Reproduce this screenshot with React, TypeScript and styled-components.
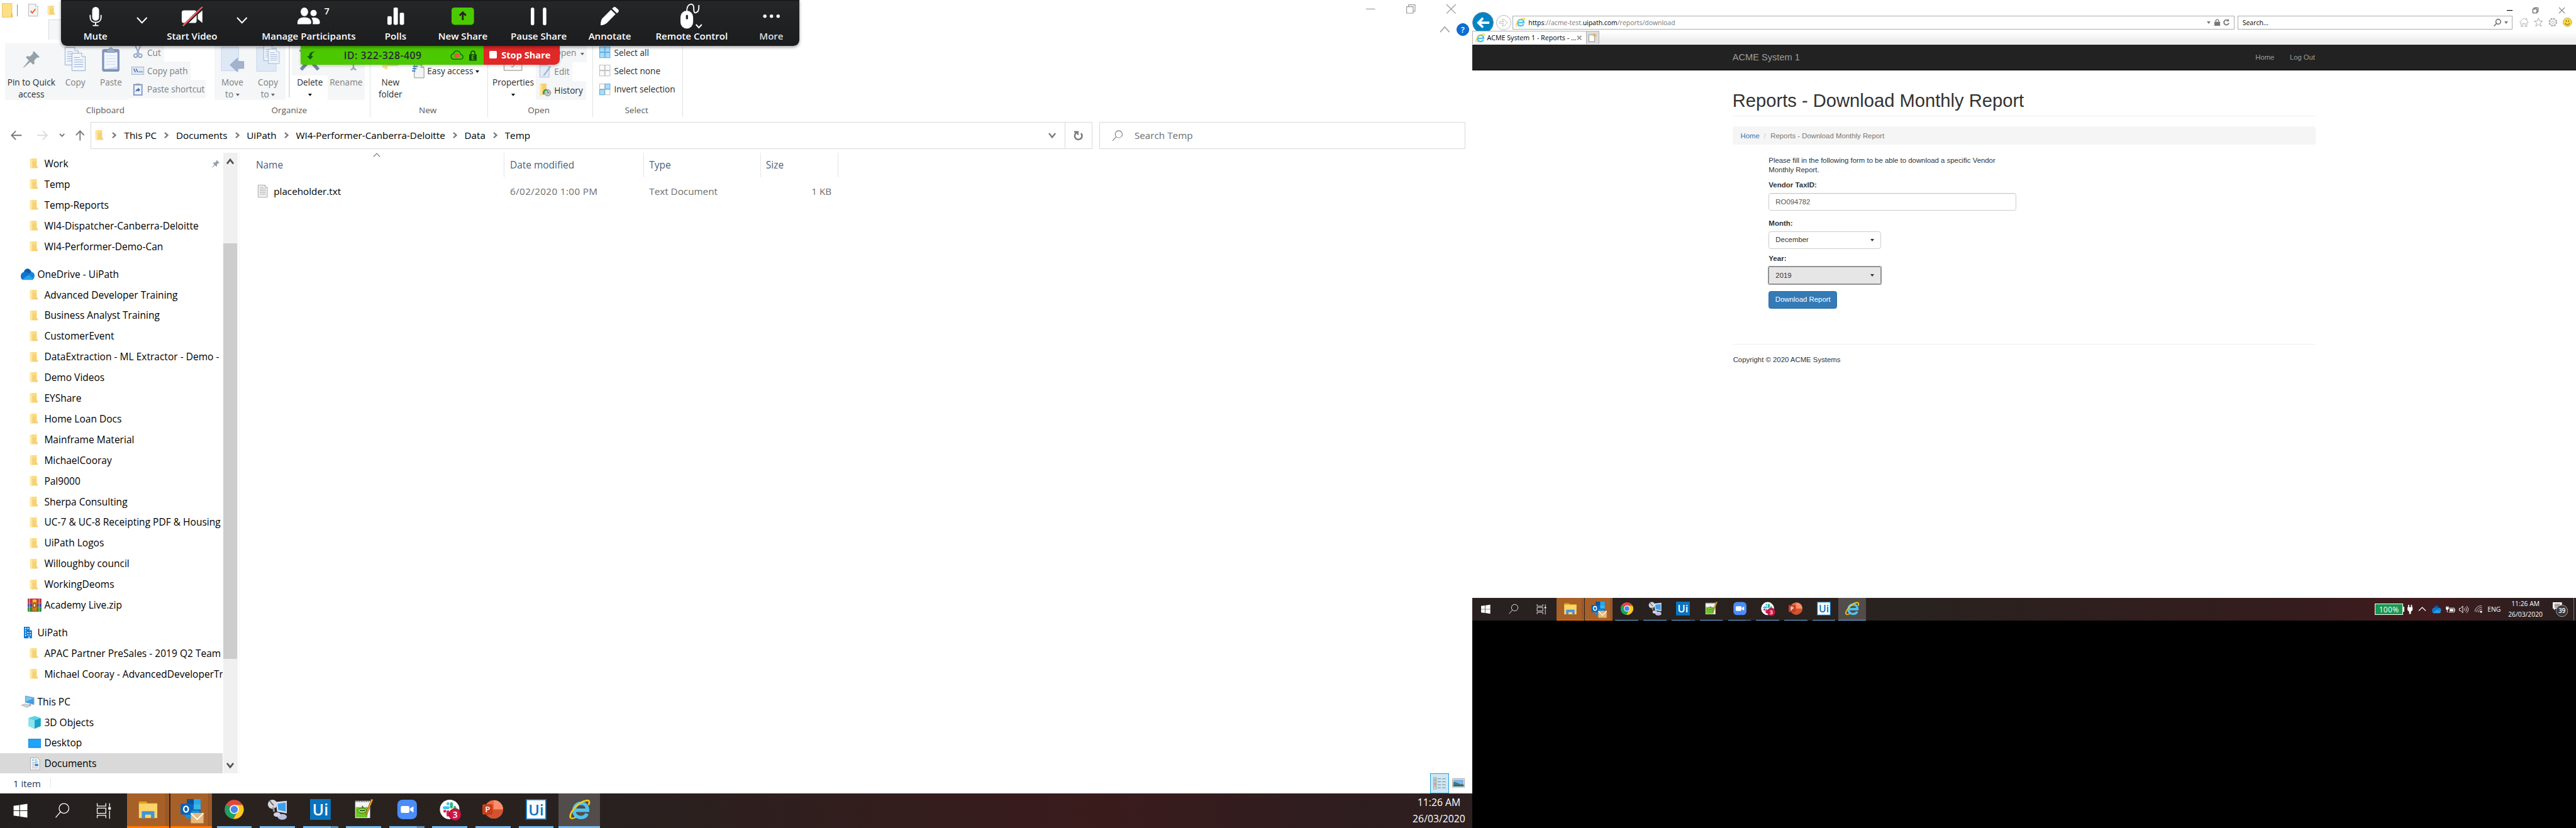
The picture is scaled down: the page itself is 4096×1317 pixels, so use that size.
import React from "react";
import styled, { createGlobalStyle, css } from "styled-components";

const Global = createGlobalStyle`
  html, body { margin: 0; padding: 0; background: #000; overflow: hidden; }
  * { box-sizing: border-box; }
  svg { display: block; flex: none; overflow: visible; }
`;

const UI = `"Open Sans", "Noto Sans", sans-serif`;
const ARIAL = `"Liberation Sans", Arial, sans-serif`;

/* ---------- desktop ---------- */
const Desktop = styled.div`
  zoom: 0.9142857;
  display: flex;
  width: 4480px;
  height: 1441px;
  background: #000;
  font-family: ${UI};
  color: #000;
  white-space: nowrap;
`;
const LeftMonitor = styled.div`
  position: relative;
  display: flex;
  flex-direction: column;
  width: 2560px;
  height: 1441px;
  background: #fff;
`;
const RightMonitor = styled.div`
  display: flex;
  flex-direction: column;
  width: 1920px;
  height: 1080px;
  background: #fff;
`;
const Spacer = styled.div`flex: 1;`;

/* ---------- explorer ---------- */
const TitleRow = styled.div`
  display: flex;
  align-items: flex-start;
  height: 34px;
  padding: 4px 28px 0 3px;
`;
const QuickAccess = styled.div`
  display: flex;
  align-items: center;
  height: 28px;
`;
const QuickDivider = styled.div`
  width: 1px;
  height: 20px;
  margin: 0 18px 0 8px;
  background: #8a8a8a;
`;
const WindowButtons = styled.div<{ $gap: number; $top: number }>`
  display: flex;
  align-items: center;
  gap: ${p => p.$gap}px;
  padding-top: ${p => p.$top}px;
`;
const TabRow = styled.div`
  display: flex;
  align-items: flex-start;
  height: 41px;
  padding: 0 5px 0 84px;
`;
const RibbonTab = styled.div`
  width: 60px;
  height: 35px;
  background: #f5f6f7;
  border: 1px solid #dadbdc;
  border-bottom: 0;
`;
const TabTools = styled.div`
  display: flex;
  align-items: center;
  gap: 12px;
  padding-top: 6px;
`;
const HelpBadge = styled.div`
  display: flex;
  align-items: center;
  justify-content: center;
  width: 22px;
  height: 22px;
  border-radius: 50%;
  background: #0a6fd6;
  border: 1px solid #0a55b5;
  color: #fff;
  font-size: 14px;
  font-weight: 600;
`;
const Ribbon = styled.div`
  display: flex;
  height: 137px;
`;
const Group = styled.div<{ $w: number; $line?: boolean }>`
  display: flex;
  flex-direction: column;
  width: ${p => p.$w}px;
  height: 128px;
  ${p => p.$line && css`border-right: 1px solid #e1e2e3;`}
`;
const GroupBody = styled.div<{ $pl?: number }>`
  display: flex;
  height: 99px;
  padding-left: ${p => p.$pl || 0}px;
`;
const GroupLabel = styled.div<{ $c: number }>`
  width: ${p => p.$c * 2}px;
  height: 29px;
  line-height: 37px;
  text-align: center;
  font-size: 14.8px;
  color: #5a5a5a;
`;
const BigButton = styled.div<{ $w: number; $bg?: boolean; $dim?: boolean; $iconBg?: boolean }>`
  display: flex;
  flex-direction: column;
  align-items: center;
  width: ${p => p.$w}px;
  height: 99px;
  font-size: 14.9px;
  line-height: 21px;
  text-align: center;
  color: ${p => (p.$dim ? "#7c7f82" : "#2d2d2d")};
  background: ${p => (p.$bg ? "#f4f6f7" : p.$iconBg ? "linear-gradient(#f4f6f7 56px, #fff 56px)" : "transparent")};
`;
const BigIcon = styled.div`
  display: flex;
  align-items: center;
  justify-content: center;
  height: 57px;
`;
const SmallList = styled.div<{ $ml?: number }>`
  display: flex;
  flex-direction: column;
  align-items: flex-start;
  margin-left: ${p => p.$ml || 0}px;
`;
const SmallButton = styled.div<{ $w?: number; $bg?: boolean; $dim?: boolean; $h?: number }>`
  display: flex;
  align-items: center;
  width: ${p => (p.$w ? p.$w + "px" : "auto")};
  height: ${p => p.$h || 32}px;
  font-size: 14.9px;
  color: ${p => (p.$dim ? "#7c7f82" : "#2d2d2d")};
  background: ${p => (p.$bg ? "#f4f6f7" : "transparent")};
`;
const SmallIcon = styled.div<{ $w: number }>`
  display: flex;
  justify-content: center;
  width: ${p => p.$w}px;
`;
const OrganizeLine = styled.div`
  width: 2px;
  height: 95px;
  margin: 0 4px 0 5px;
  background: #dfe0e1;
`;
const DownTri = styled.i<{ $dim?: boolean; $s?: number; $c?: string }>`
  display: inline-block;
  vertical-align: middle;
  border: ${p => p.$s || 4}px solid transparent;
  border-top: ${p => (p.$s || 4) + 1}px solid ${p => p.$c || (p.$dim ? "#666" : "#111")};
  border-bottom: 0;
`;

const AddressRow = styled.div`
  display: flex;
  height: 53px;
  padding-right: 12px;
  font-size: 16.7px;
`;
const NavArrows = styled.div`
  display: flex;
  align-items: center;
  width: 158px;
  height: 47px;
  padding-left: 19px;
`;
const NavSlot = styled.div<{ $w: number }>`
  width: ${p => p.$w}px;
`;
const AddressBox = styled.div`
  display: flex;
  align-items: center;
  width: 1742px;
  height: 47px;
  padding-left: 6px;
  border: 1px solid #d9d9d9;
`;
const CrumbSep = styled.div<{ $w?: number }>`
  display: flex;
  justify-content: center;
  width: ${p => p.$w || 33.6}px;
`;
const RefreshCell = styled.div`
  display: flex;
  align-items: center;
  justify-content: center;
  width: 47px;
  height: 45px;
  margin-left: 17px;
  border-left: 1px solid #d9d9d9;
`;
const SearchBox = styled.div`
  display: flex;
  align-items: center;
  gap: 20px;
  width: 636px;
  height: 47px;
  margin-left: 12px;
  padding-left: 21px;
  border: 1px solid #d9d9d9;
  color: #6d6d6d;
`;

const Main = styled.div`
  display: flex;
  height: 1080px;
`;
const Tree = styled.div`
  display: flex;
  flex-direction: column;
  width: 387px;
  height: 1080px;
  padding-top: 2px;
  overflow: hidden;
`;
const TreeRow = styled.div<{ $root?: boolean; $active?: boolean }>`
  display: flex;
  align-items: center;
  flex: none;
  height: 36px;
  margin-top: ${p => (p.$root ? 12 : 0)}px;
  padding-left: ${p => (p.$root ? 34 : 46)}px;
  font-size: 17px;
  background: ${p => (p.$active ? "#d9d9d9" : "transparent")};
`;
const TreeIcon = styled.div<{ $shift: number }>`
  display: flex;
  align-items: center;
  justify-content: center;
  flex: none;
  width: 31px;
  padding-right: ${p => p.$shift}px;
`;
const TreeText = styled.span`
  flex: 1;
  padding-bottom: 1px;
`;
const PinSlot = styled.div`
  padding-right: 5px;
`;
const ScrollBar = styled.div`
  display: flex;
  flex-direction: column;
  align-items: center;
  width: 25px;
  height: 1079px;
  margin: 1px 3px 0 1px;
  background: #f0f0f0;
`;
const ScrollArrow = styled.div<{ $h: number; $pt: number }>`
  height: ${p => p.$h}px;
  padding-top: ${p => p.$pt}px;
`;
const ScrollThumb = styled.div`
  width: 24px;
  height: 723px;
  background: #cdcdcd;
`;
const FileList = styled.div`
  display: flex;
  flex-direction: column;
  flex: 1;
  border-left: 2px solid #f6f6f6;
`;
const HeaderRow = styled.div`
  display: flex;
  height: 42px;
  margin-top: 1px;
  color: #4c607a;
  font-size: 16.9px;
`;
const HeaderCell = styled.div<{ $w: number; $pl: number }>`
  position: relative;
  display: flex;
  width: ${p => p.$w}px;
  padding-left: ${p => p.$pl}px;
  line-height: 43px;
  border-right: 1px solid #e5e5e5;
`;
const SortMark = styled.div`
  position: absolute;
  left: 233px;
  top: 1px;
`;
const FileRow = styled.div`
  display: flex;
  align-items: center;
  height: 36px;
  margin-top: 7px;
  font-size: 16.7px;
  color: #6d6d6d;
`;
const FileCell = styled.div<{ $w: number; $pl?: number; $dark?: boolean; $right?: boolean; $ls?: number }>`
  display: flex;
  align-items: center;
  gap: 11px;
  width: ${p => p.$w}px;
  padding-left: ${p => p.$pl || 0}px;
  padding-right: ${p => (p.$right ? 11 : 0)}px;
  justify-content: ${p => (p.$right ? "flex-end" : "flex-start")};
  letter-spacing: ${p => p.$ls || 0}px;
  color: ${p => (p.$dark ? "#000" : "#6d6d6d")};
`;
const StatusBar = styled.div`
  display: flex;
  align-items: center;
  height: 35px;
  padding: 0 12px 0 23px;
  font-size: 16.4px;
  color: #1e395b;
`;
const StatusLine = styled.div`
  width: 1px;
  height: 17px;
  margin-left: 17px;
  background: #e6e6e6;
`;
const ViewButton = styled.div<{ $on?: boolean }>`
  display: flex;
  align-items: center;
  justify-content: center;
  width: ${p => (p.$on ? 33 : 22)}px;
  height: 35px;
  margin-left: 6px;
  background: ${p => (p.$on ? "#cce8f6" : "transparent")};
  border: ${p => (p.$on ? "1px solid #2a9fd8" : "0")};
`;

/* ---------- meeting toolbar ---------- */
const MeetingOverlay = styled.div`
  position: absolute;
  left: 106px;
  top: 0;
  width: 1284px;
`;
const MeetingBar = styled.div`
  position: relative;
  z-index: 2;
  display: flex;
  height: 80px;
  border-radius: 0 0 10px 10px;
  background: linear-gradient(#141516 0, #252628 3px, #1b1c1e 100%);
  box-shadow: 0 2px 6px rgba(0, 0, 0, 0.4);
`;
const MeetingItem = styled.div<{ $w: number; $dim?: boolean }>`
  position: relative;
  display: flex;
  flex-direction: column;
  align-items: center;
  width: ${p => p.$w}px;
  color: ${p => (p.$dim ? "#dcdcdc" : "#fff")};
  font-size: 16.5px;
  font-weight: 600;
  line-height: 24px;
`;
const MeetingIcon = styled.div`
  display: flex;
  align-items: center;
  justify-content: center;
  height: 51px;
  padding-top: 6px;
`;
const ChevronSlot = styled.div`
  display: flex;
  justify-content: center;
  width: 42px;
  padding-top: 31px;
`;
const Count = styled.span`
  position: absolute;
  left: 122px;
  top: 8px;
  font-size: 16px;
`;
const ShareStrip = styled.div`
  display: flex;
  width: 450px;
  height: 33px;
  margin-left: 417px;
  border-radius: 0 0 9px 4px;
  overflow: hidden;
  box-shadow: 0 2px 5px rgba(0, 0, 0, 0.2);
`;
const MeetingId = styled.div`
  display: flex;
  align-items: center;
  width: 318px;
  padding-left: 11px;
  background: #4cc800;
  color: #232b33;
  font-size: 17.2px;
  font-weight: 600;
`;
const IdText = styled.span`
  width: 134px;
  margin-left: 49px;
  letter-spacing: 0.6px;
`;
const IdIcons = styled.div`
  display: flex;
  align-items: center;
  gap: 10px;
  margin-left: 51px;
`;
const StopShare = styled.div`
  display: flex;
  align-items: center;
  gap: 8px;
  width: 132px;
  padding: 0 0 3px 10px;
  background: #e02828;
  color: #fff;
  font-size: 16px;
  font-weight: 700;
`;
const StopSquare = styled.div`
  width: 13px;
  height: 13px;
  border-radius: 2px;
  background: #fff;
`;

/* ---------- taskbar ---------- */
const Bar = styled.div<{ $k: number; $right?: boolean }>`
  display: flex;
  align-items: stretch;
  height: ${p => (p.$k === 1 ? 61 : 40)}px;
  color: #fff;
  background: ${p =>
    p.$right
      ? "linear-gradient(90deg, #28211f 0, #29221f 40%, #351c1d 75%, #421c1e 87%, #301e1f 94%, #2b2021 100%)"
      : "linear-gradient(90deg, #231f1f 0, #29221e 12%, #28211f 42%, #331d1d 60%, #3a1b1c 75%, #2f1d1f 90%, #2e1f20 100%)"};
`;
const BarSlot = styled.div<{ $w: number }>`
  display: flex;
  align-items: center;
  justify-content: center;
  width: ${p => p.$w}px;
`;
const Tile = styled.div<{ $k: number; $kind?: string }>`
  display: flex;
  flex-direction: column;
  align-items: center;
  width: ${p => (p.$k === 1 ? 73 : 48)}px;
  margin-right: ${p => (p.$k === 1 ? 2 : 1)}px;
  background: ${p =>
    p.$kind === "alert"
      ? "linear-gradient(90deg, #a86029 91%, #8b4f25 91%, #9c5a29 94%)"
      : p.$kind === "active"
      ? "#524c4a"
      : "transparent"};
`;
const TileIcon = styled.div`
  flex: 1;
  display: flex;
  align-items: center;
`;
const Underline = styled.div<{ $k: number; $kind?: string }>`
  width: ${p => (p.$kind === "alert" || p.$kind === "active" ? "100%" : p.$k === 1 ? "61px" : "40px")};
  height: ${p => (p.$k === 1 ? 4 : 2)}px;
  background: ${p =>
    p.$kind === "alert"
      ? "#ff7800"
      : p.$kind === "multi"
      ? "linear-gradient(90deg, #76b9ed 78%, #436f91 78%, #5d90b8 81%)"
      : "#76b9ed"};
`;
const Clock = styled.div<{ $fs: number; $lh: number; $w: number }>`
  width: ${p => p.$w}px;
  text-align: center;
  font-size: ${p => p.$fs}px;
  line-height: ${p => p.$lh}px;
  align-self: center;
`;
const Tray = styled.div`
  display: flex;
  align-items: center;
`;
const BatteryMeter = styled.div`
  display: flex;
  align-items: center;
  justify-content: center;
  width: 49px;
  height: 20px;
  border: 2px solid #fff;
  background: #1a9850;
  font-size: 13px;
  letter-spacing: 0.4px;
`;
const BatteryNub = styled.div`
  width: 2px;
  height: 9px;
  background: #fff;
`;
const TrayText = styled.span`
  display: block;
  width: 24px;
  font-size: 11.4px;
`;
const TraySlot = styled.div<{ $ml: number }>`
  margin-left: ${p => p.$ml}px;
`;
const ShowDesktop = styled.div`
  width: 4px;
  height: 40px;
  margin-left: 10px;
  border-left: 1px solid #7a7070;
`;

/* ---------- browser ---------- */
const BrowserTop = styled.div`
  display: flex;
  justify-content: flex-end;
  height: 27px;
  padding: 9px 20px 0 0;
`;
const BrowserRow = styled.div`
  display: flex;
  align-items: center;
  height: 24px;
  margin-bottom: 3px;
  padding-left: 1px;
`;
const BackButton = styled.div`
  display: flex;
  align-items: center;
  justify-content: center;
  width: 37px;
  height: 37px;
  border-radius: 50%;
  flex: none;
  background: #0083c5;
  border: 1px solid #6d8ea0;
`;
const ForwardButton = styled.div`
  display: flex;
  align-items: center;
  justify-content: center;
  width: 26px;
  height: 26px;
  margin: 0 3px 0 4px;
  border: 1px solid #b5b5b5;
  border-radius: 50%;
  flex: none;
`;
const UrlBox = styled.div<{ $w: number; $ml?: number; $pl?: number }>`
  display: flex;
  align-items: center;
  gap: 6px;
  width: ${p => p.$w}px;
  height: 24px;
  flex: none;
  margin-left: ${p => p.$ml || 0}px;
  padding: 0 7px 0 ${p => p.$pl || 4}px;
  border: 1px solid #adadad;
  background: #fff;
  font-size: 11.45px;
`;
const UrlText = styled.span`
  color: #777;
  b { font-weight: 400; color: #000; }
`;
const BrowserTools = styled.div`
  display: flex;
  align-items: center;
  gap: 9px;
  margin-left: 12px;
`;
const TabStrip = styled.div`
  position: relative;
  display: flex;
  height: 24px;
  border-bottom: 1px solid #fff;
  background: linear-gradient(#fff 10%, #f1f1f1 60%, #ebebeb);
`;
const BrowserTab = styled.div`
  display: flex;
  align-items: center;
  width: 199px;
  padding-left: 5px;
  background: #fff;
  border: 1px solid #b0b0b0;
  border-bottom: 0;
  font-size: 11.7px;
`;
const TabTitle = styled.span`
  width: 161px;
  padding-left: 4px;
`;
const NewTab = styled.div`
  display: flex;
  align-items: center;
  justify-content: center;
  width: 22px;
  background: #dcdcdc;
  border: 1px solid #b5b5b5;
  border-left: 0;
  border-bottom: 0;
`;
const SiteNav = styled.div`
  display: flex;
  align-items: center;
  height: 45px;
  padding: 0 454px 0 453px;
  background: #222;
  border-bottom: 1px solid #000;
  color: #9d9d9d;
  font-family: ${ARIAL};
  font-size: 12.3px;
`;
const Brand = styled.span`
  flex: 1;
  font-size: 16px;
`;
const NavLink = styled.span`
  margin-left: 27px;
`;
const Page = styled.div`
  display: flex;
  flex-direction: column;
  height: 917px;
  padding: 0 453px;
  font-family: ${ARIAL};
  font-size: 12.45px;
  color: #333;
`;
const PageTitle = styled.h1`
  height: 79px;
  margin: 0 0 18px;
  padding: 34px 0 0 0;
  font-size: 31.9px;
  font-weight: 400;
  line-height: 36px;
  border-bottom: 1px solid #eee;
`;
const Breadcrumb = styled.div`
  display: flex;
  align-items: center;
  height: 32px;
  padding-left: 14px;
  border-radius: 4px;
  background: #f5f5f5;
  color: #777;
  a { color: #337ab7; }
  i { color: #ccc; font-style: normal; width: 20px; text-align: center; margin: 0 0 0 -1px; }
`;
const Form = styled.div`
  display: flex;
  flex-direction: column;
  align-items: flex-start;
  height: 347px;
  padding: 19px 0 0 63px;
  border-bottom: 1px solid #eee;
  line-height: 17px;
`;
const FieldLabel = styled.div<{ $mt: number }>`
  margin: ${p => p.$mt}px 0 5px;
  font-weight: 700;
  font-size: 12.6px;
`;
const TextField = styled.div`
  display: flex;
  align-items: center;
  width: 431px;
  height: 31px;
  padding-left: 11px;
  border: 1px solid #ccc;
  border-radius: 4px;
  color: #555;
  box-shadow: inset 0 1px 1px rgba(0, 0, 0, 0.075);
`;
const Select = styled.div<{ $active?: boolean }>`
  display: flex;
  align-items: center;
  justify-content: space-between;
  width: 195px;
  height: ${p => (p.$active ? 31 : 30)}px;
  padding: 0 10px 0 11px;
  border: 1px solid ${p => (p.$active ? "#8c8c8c" : "#ccc")};
  border-radius: ${p => (p.$active ? 2 : 4)}px;
  background: ${p => (p.$active ? "#e6e6e6" : "#fff")};
  outline: ${p => (p.$active ? "1px dotted #333" : "none")};
`;
const SubmitButton = styled.div`
  display: flex;
  align-items: center;
  justify-content: center;
  width: 119px;
  height: 30px;
  margin-top: 12px;
  border: 1px solid #2e6da4;
  border-radius: 4px;
  background: #337ab7;
  color: #fff;
`;
const Copyright = styled.div`
  padding: 20px 0 0 1px;
`;

/* ---------- icons ---------- */
const Folder = ({ w = 15, h = 20 }: { w?: number; h?: number }) => (
  <svg width={w} height={h} viewBox="0 0 15 20">
    <path d="M3 1h9.500v13l1.800 1v3H3z" fill="#f6d277" />
    <path d="M3 1h8.500v5H3z" fill="#fbdc86" />
    <path d="M.5.8 4.500 3.500v16L.5 17z" fill="#fde6a2" />
  </svg>
);
const Chevron = ({ w, h, dir, c, sw = 2 }: { w: number; h: number; dir: "u" | "d" | "r"; c: string; sw?: number }) => {
  const pts = dir === "u" ? `0,${h} ${w / 2},0 ${w},${h}` : dir === "d" ? `0,0 ${w / 2},${h} ${w},0` : `0,0 ${w},${h / 2} 0,${h}`;
  return (
    <svg width={w} height={h}>
      <polyline points={pts} fill="none" stroke={c} strokeWidth={sw} />
    </svg>
  );
};
const Minimize = ({ c, s = 16 }: { c: string; s?: number }) => (
  <svg width={s} height={s} viewBox="0 0 16 16"><path d="M0 8h16" stroke={c} strokeWidth={20 / s} /></svg>
);
const Restore = ({ c, s = 16 }: { c: string; s?: number }) => (
  <svg width={s} height={s} viewBox="0 0 16 16" fill="none" stroke={c} strokeWidth="1.300">
    <path d="M.7 4h11.300v11.300H.7zM4 4V.7h11.300V12H12" />
  </svg>
);
const Close = ({ c, s = 16 }: { c: string; s?: number }) => (
  <svg width={s} height={s} viewBox="0 0 16 16" stroke={c} strokeWidth="1.300"><path d="M0 0l16 16M16 0L0 16" /></svg>
);
const CheckDoc = () => (
  <svg width="17" height="22" viewBox="0 0 17 22">
    <path d="M.5.5h12l4 4v17H.5z" fill="#f4f4f4" stroke="#b4b4b4" />
    <path d="M12.500.5v4h4" fill="#fff" stroke="#b4b4b4" />
    <path d="M4 12.500l3 3.500 5.500-7" fill="none" stroke="#f0591c" strokeWidth="2" />
  </svg>
);
const Pin = ({ s }: { s: number }) => (
  <svg width={s} height={s} viewBox="0 0 30 30" fill="#96a0a8">
    <path d="M19 1.500 28.500 11l-1.800 1.500-2.500-.3-4.800 5 .6 4.800-2.400 2L5.500 12l2-2.200 5 .5 5-5-.2-2.500z" />
    <path d="M11 16.500 13.500 19 2 29H.8z" />
  </svg>
);
const Sheet = ({ x, y, fold = 6 }: { x: number; y: number; fold?: number }) => (
  <g transform={`translate(${x} ${y})`} stroke="#8fa6ca">
    <path d={`M.5.5h${23 - fold}l${fold} ${fold}V31H.5z`} fill="#f1f6fd" />
    <path d={`M${23.5 - fold}.5v${fold}h${fold}`} fill="#fff" />
    <path d="M4 8h10M4 12h16M4 16h16M4 20h16M4 24h16" />
  </g>
);
const CopyIcon = () => (
  <svg width="36" height="42"><Sheet x={0} y={0} /><Sheet x={12} y={10} /></svg>
);
const PasteIcon = () => (
  <svg width="31" height="43" viewBox="0 0 31 43">
    <rect x="1" y="4" width="29" height="38" rx="2" fill="#8295bd" stroke="#7488b3" />
    <path d="M4 9h23v29H4z" fill="#f1f6fd" />
    <path d="M4 38h23v-4z" fill="#c9d8ee" />
    <path d="M8 9V4h4c0-4 7-4 7 0h4v5z" fill="#9fb0cf" stroke="#7488b3" />
    <path d="M7 15h17M7 20h17M7 25h17M7 30h17" stroke="#cad7ea" />
  </svg>
);
const Scissors = () => (
  <svg width="16" height="22" viewBox="0 0 16 22" fill="none" stroke="#93a6c8" strokeWidth="2">
    <path d="M3.500 0 10 14M12.500 0 6 14" />
    <circle cx="4" cy="17" r="3" /><circle cx="12" cy="17" r="3" />
  </svg>
);
const PathIcon = () => (
  <svg width="22" height="14" viewBox="0 0 22 14">
    <rect x=".5" y=".5" width="21" height="13" fill="#dfe9f6" stroke="#9cb0d0" />
    <path d="M4 3.500l3 6M8 3.500l3 6M13 9h1.500M15.500 9H17M18 9h1.500" stroke="#41598c" strokeWidth="1.500" />
  </svg>
);
const ShortcutIcon = () => (
  <svg width="16" height="22" viewBox="0 0 16 22">
    <path d="M1 3h14v18H1z" fill="#eef4fc" stroke="#8296bf" strokeWidth="2" />
    <path d="M4.500 1h7v3h-7z" fill="#8ea2c6" />
    <path d="M5 17c0-4 1-5 4-5.500V9l4 4-4 3.500V14c-2 0-3 1-4 3z" fill="#4a69a8" transform="translate(-1 -1)" />
  </svg>
);
const MoveToIcon = () => (
  <svg width="39" height="43" viewBox="0 0 39 43">
    <path d="M0 0h30v41H0z" fill="#dfe9f6" stroke="#c3d3ea" />
    <path d="M15 31 28 19v6h11v12H28v6z" fill="#a3b3cd" stroke="#8fa1c0" />
  </svg>
);
const CopyToIcon = () => (
  <svg width="40" height="43" viewBox="0 0 40 43">
    <path d="M0 1h34v41H0z" fill="#dfe9f6" stroke="#c3d3ea" />
    <g transform="translate(12 -3) scale(.85)"><Sheet x={0} y={0} /></g>
    <g transform="translate(20 3) scale(.82)"><Sheet x={0} y={0} /></g>
  </svg>
);
const DeleteIcon = () => (
  <svg width="36" height="40" viewBox="0 0 36 40" stroke="#7488ab" strokeWidth="6">
    <path d="M2 3l31 35M34 3L3 38" />
  </svg>
);
const RenameIcon = () => (
  <svg width="34" height="40" viewBox="0 0 34 40" fill="none" stroke="#98a6bf" strokeWidth="2.500">
    <path d="M29.500 4v30M29.500 32c0 4-2 6-5 6M29.500 32c0 4 2 6 5 6" />
  </svg>
);
const NewFolderIcon = () => (
  <svg width="28" height="38" viewBox="0 0 28 38">
    <path d="M4 4h24v26H4z" fill="#f7cf72" /><path d="M0 3l9 6v29L0 33z" fill="#fde09a" />
  </svg>
);
const EasyAccessIcon = () => (
  <svg width="22" height="26" viewBox="0 0 22 26">
    <path d="M4 2h12l5 5v18H4z" fill="#f4f4f4" stroke="#8a8a8a" />
    <path d="M16 2v5h5" fill="none" stroke="#8a8a8a" />
    <path d="M2 5h8M1 9h7M0 13h6" stroke="#2f78c4" strokeWidth="2" />
  </svg>
);
const PropertiesIcon = () => (
  <svg width="32" height="42" viewBox="0 0 32 42">
    <path d="M.5.5h31v40H.5z" fill="#fafafa" stroke="#7e7e7e" /><path d="M13 33l2 2 4-5" fill="none" stroke="#555" />
  </svg>
);
const EditIcon = () => (
  <svg width="20" height="23" viewBox="0 0 20 23">
    <path d="M.5.500h13l3 3v18H.5z" fill="#e3edf8" stroke="#a9b9d3" />
    <path d="M7 17 18 2l2 1.500L9 18.500l-3 1z" fill="#9fb4d3" />
  </svg>
);
const HistoryIcon = () => (
  <svg width="20" height="23" viewBox="0 0 20 23">
    <path d="M2 0h10v19H2z" fill="#f7cf72" /><path d="M0 0l4 3v20l-4-3z" fill="#fde6a2" />
    <circle cx="14" cy="16" r="5.500" fill="#c4c8cc" stroke="#808080" />
    <path d="M14 12v4h3" fill="none" stroke="#555" />
    <path d="M7 19c-1-5 1-9 6-8" fill="none" stroke="#2da836" strokeWidth="2.500" />
  </svg>
);
const SelectIcon = ({ on }: { on: boolean[] }) => (
  <svg width="19" height="20" viewBox="0 0 19 20">
    {on.map((v, i) => (
      <rect key={i} x={(i % 2) * 9.5 + 0.5} y={Math.floor(i / 2) * 10 + 0.5} width="8.500" height="9"
        fill={v ? "#a9dcfb" : "#fbfbfb"} stroke={v ? "#4ba3dc" : "#b9b9b9"} />
    ))}
  </svg>
);
const Arrow = ({ dir, c }: { dir: "l" | "r" | "u"; c: string }) => (
  <svg width="19" height="18" viewBox="0 0 19 18" fill="none" stroke={c} strokeWidth="2">
    {dir === "l" && <path d="M19 9H1.500M9 1.500 1.500 9 9 16.500" />}
    {dir === "r" && <path d="M0 9h17.500M10 1.500 17.500 9 10 16.500" />}
    {dir === "u" && <path d="M8 18V1.500M1 9l7-7.500L15 9" />}
  </svg>
);
const Refresh = ({ s, c, sw = 2.5 }: { s: number; c: string; sw?: number }) => (
  <svg width={s} height={s} viewBox="0 0 16 16" fill="none" stroke={c} strokeWidth={sw}>
    <path d="M11.500 3.500A6 6 0 1 1 4.500 3.400" transform="rotate(10 8 8)" />
    <path d="M1 1.800h6v5" />
  </svg>
);
const Glass = ({ s, c, sw = 1.2 }: { s: number; c: string; sw?: number }) => (
  <svg width={s} height={s} viewBox="0 0 20 20" fill="none" stroke={c} strokeWidth={sw}>
    <circle cx="12.500" cy="7.500" r="6.500" /><path d="M8 12.200 1 19.500" />
  </svg>
);
const OneDrive = ({ w = 24 }: { w?: number }) => (
  <svg width={w} height={(w * 20) / 24} viewBox="0 0 24 16" preserveAspectRatio="none">
    <path d="M5 6C6 2 9 .300 12 .300S18 3 19 6l-7 5z" fill="#0b5cb0" />
    <path d="M19 5c3 0 5 2.500 5 5s-2 6-5 6L9 9z" fill="#1687d9" />
    <path d="M5.500 5C2 5.300 0 8 0 10.500 0 14 2 16 5 16l11-8c-3-2-7-4-10.500-3z" fill="#0f73cf" />
    <path d="M2.500 15.300 13.500 9l9 5.500c-1 1-2 1.500-4 1.500H5c-1 0-2-.3-2.500-.7z" fill="#28a2ea" />
  </svg>
);
const WinRar = () => (
  <svg width="24" height="23" viewBox="0 0 24 23">
    <rect width="24" height="8" rx="1" fill="#c2304c" /><rect y="8" width="24" height="7" fill="#4a48a8" />
    <rect y="15" width="24" height="8" rx="1" fill="#2d8a3c" />
    <path d="M3 0v23M20 0v23" stroke="#d8b04a" strokeWidth="1.500" />
    <rect x="8" y="1" width="8" height="21" rx="2" fill="#d9761c" /><rect x="10" y="9" width="4" height="6" fill="#ffe9a8" stroke="#5c3a10" />
    <rect x="9" y="2" width="6" height="4" fill="#f5c23c" />
  </svg>
);
const Building = () => (
  <svg width="14" height="20" viewBox="0 0 14 20">
    <path d="M0 0h10v6h4v14H0z" fill="#0b78d4" />
    <path d="M2 2h2v2H2zM6 2h2v2H6zM2 6h2v2H2zM2 10h2v2H2zM2 14h2v2H2zM6 9h2v2H6zM10 9h2v2h-2zM6 13h2v2H6zM10 13h2v2h-2zM8 17h2v3H8z" fill="#fff" />
  </svg>
);
const PcIcon = () => (
  <svg width="24" height="22" viewBox="0 0 24 22">
    <path d="M8 1 23 4v12L8 12z" fill="#3f9fe0" stroke="#7ba4c0" /><path d="M9 2l13 3-13 6z" fill="#7cc6f3" />
    <path d="M14 15l4 1v2l-4-1z" fill="#8f9aa3" /><path d="M1 17l7-2 9 3-6 3z" fill="#cfd6da" stroke="#a5adb2" />
  </svg>
);
const Cube = () => (
  <svg width="22" height="22" viewBox="0 0 22 22">
    <path d="M11 0 21.500 3.500v14L11 22 .5 17.500v-14z" fill="#3cc4dd" />
    <path d="M.5 3.500 11 7.500V22L.5 17.500z" fill="#8fe3ee" /><path d="M11 7.500l10.500-4v14L11 22z" fill="#18a3c4" />
    <path d="M11 0 21.500 3.500 11 7.500.5 3.500z" fill="#5bd2e4" />
  </svg>
);
const DesktopIcon = () => (
  <svg width="22" height="16" viewBox="0 0 22 16"><path d="M0 0h22v16H0z" fill="#1489e6" /><path d="M1 1h20v13H1z" fill="#1fa4fb" /></svg>
);
const DocIcon = () => (
  <svg width="17" height="22" viewBox="0 0 17 22">
    <path d="M.5.500h12l4 4v17H.5z" fill="#fbfbfb" stroke="#a8a8a8" />
    <path d="M3 6l2-3 1 3M8 4h4M8 6.500h5M3 9h10" stroke="#4c9ed9" fill="none" />
    <path d="M8 11h6v4H8z" fill="#3c88c4" /><path d="M3 12h4M3 15h4M3 18h11" stroke="#9a9a9a" />
  </svg>
);
const TextFile = () => (
  <svg width="17" height="22" viewBox="0 0 17 22">
    <path d="M.5.500h12l4 4v17H.5z" fill="#f2f2f2" stroke="#a3a3a3" /><path d="M12.500.5v4h4" fill="#fff" stroke="#a3a3a3" />
    <path d="M3 4.500h7M3 7.500h11M3 10.500h11M3 13.500h11M3 16.500h11" stroke="#a9a9a9" />
  </svg>
);
const Details = () => (
  <svg width="22" height="22" viewBox="0 0 22 22">
    {["#3f86c6", "#7d9b3c", "#c33b28", "#9db4c9"].map((c, i) => (
      <g key={c}>
        <rect x=".7" y={i * 5.2 + 0.7} width="4.600" height="4.600" fill="#fff" stroke="#9a9a9a" />
        <rect x="2" y={i * 5.2 + 2} width="2" height="2" fill={c} />
        <path d={`M7.500 ${i * 5.2 + 3}h6M15.500 ${i * 5.2 + 3}h6`} stroke="#777" />
      </g>
    ))}
  </svg>
);
const Thumbs = () => (
  <svg width="22" height="16" viewBox="0 0 22 16">
    <path d="M.5.5h21v15H.5z" fill="#fff" stroke="#9c9c9c" /><path d="M2 2h18v12H2z" fill="#7db5ea" />
    <path d="M2 6c5 0 9 3 12 4l6 .5V14H2z" fill="#457a6a" /><path d="M2 11.500h18V14H2z" fill="#2d5f8c" />
  </svg>
);

/* meeting icons */
const Mic = () => (
  <svg width="22" height="34" viewBox="0 0 22 34">
    <rect x="5" y="0" width="12" height="24" rx="6" fill="#fff" />
    <path d="M1.500 14v4c0 6 4 9 9.500 9s9.500-3 9.500-9v-4M11 27v5M6 32.500h10" fill="none" stroke="#fff" strokeWidth="2" />
  </svg>
);
const Camera = () => (
  <svg width="38" height="34" viewBox="0 0 38 34">
    <rect x="1" y="6" width="26" height="22" rx="4" fill="#fff" /><path d="M29 13l8-7v22l-8-7z" fill="#fff" />
    <path d="M36.500 1.500 3 34.500" stroke="#222325" strokeWidth="5" /><path d="M37 0 3 33" stroke="#fb5b5b" strokeWidth="2.500" />
  </svg>
);
const People = () => (
  <svg width="39" height="30" viewBox="0 0 39 30" fill="#fff">
    <ellipse cx="12" cy="7.500" rx="6.500" ry="7.500" /><path d="M0 29v-3c0-6 5-9 12-9s12 3 12 9c0 2-1 3-3 3z" />
    <circle cx="28" cy="9.500" r="5.500" /><path d="M24.500 18c8-1.500 14.500 1 14.500 8 0 2-1 3-3 3h-9.500c1-5-.5-8-2-11z" />
  </svg>
);
const PollsIcon = () => (
  <svg width="29" height="30" viewBox="0 0 29 30" fill="#fff">
    <rect x="0" y="15" width="7.500" height="15" rx="2" /><rect x="10.700" y="0" width="7.500" height="30" rx="2" /><rect x="21.500" y="9" width="7.500" height="21" rx="2" />
  </svg>
);
const NewShareIcon = () => (
  <svg width="39" height="30" viewBox="0 0 39 30">
    <rect width="39" height="30" rx="5" fill="#4cc800" /><path d="M19.500 22V9M14 14l5.500-5.500L25 14" fill="none" stroke="#222325" strokeWidth="3" />
  </svg>
);
const Pause = () => (
  <svg width="27" height="31" fill="#fff"><rect width="6" height="31" rx="3" /><rect x="21" width="6" height="31" rx="3" /></svg>
);
const Pencil = () => (
  <svg width="32" height="32" viewBox="0 0 32 32" fill="#fff">
    <path d="M0 32c0-6 1-9 3-12L18 5l8 7.500L11 28c-3 2.500-7 4-11 4z" /><path d="M20 3l2-2c1.500-1.500 3.500-1 5 .5l3.500 3c1.500 1.500 1.500 3.500 0 5L28 11z" />
  </svg>
);
const Mouse = () => (
  <svg width="38" height="42" viewBox="0 0 38 42">
    <path d="M11 12C11-3 23-3 23 5s1 11 5 9 4-6 4-13" fill="none" stroke="#fff" strokeWidth="2" />
    <rect x="0" y="11" width="22" height="31" rx="11" fill="#fff" /><rect x="9.500" y="18" width="3.500" height="8" rx="1.700" fill="#222325" />
    <path d="M27 35l5 5.500 5-5.500" fill="none" stroke="#fff" strokeWidth="2.200" />
  </svg>
);
const Dots = () => (
  <svg width="30" height="30" fill="#fff"><circle cx="3.500" cy="15" r="3" /><circle cx="15" cy="15" r="3" /><circle cx="26.500" cy="15" r="3" /></svg>
);
const CurvedArrow = () => (
  <svg width="15" height="14" viewBox="0 0 15 14">
    <path d="M15 0C8-.5 4 2 4 8H0l6 6 5-6H8c0-4 2-7 7-8z" fill="#0c5a14" />
  </svg>
);
const RecCloud = () => (
  <svg width="23" height="17" viewBox="0 0 23 17">
    <path d="M6 15.500h11c7 0 6.500-8 1-8C17-.5 6.500-1 6 5.500c-6 1-6.500 10 0 10z" fill="none" stroke="#0c6b14" strokeWidth="1.600" />
    <circle cx="11.500" cy="9.500" r="4" fill="#ff4a4a" />
  </svg>
);
const SecureLock = () => (
  <svg width="13" height="18" viewBox="0 0 13 18">
    <path d="M3 8V5c0-5 7-5 7 0v3" fill="none" stroke="#0c4a12" strokeWidth="1.800" /><path d="M0 7h13v11H0z" fill="#0c4a12" />
    <path d="M9 9.500H5v6h4M5 12.500h3" fill="none" stroke="#4cc800" strokeWidth="1.300" />
  </svg>
);

/* taskbar icons drawn on a 36-unit grid */
const WinLogo = () => (
  <g fill="#fff"><path d="M5 9.500l10-1.400v9.400H5zM16.200 8 29 6v11.500H16.200zM5 18.600h10V28L5 26.600zM16.200 18.600H29V30l-12.800-1.900z" /></g>
);
const TaskGlass = () => (
  <g fill="none" stroke="#fff" strokeWidth="1.400"><circle cx="20.500" cy="14" r="8.500" /><path d="M14.500 20 6 30" /></g>
);
const TaskView = () => (
  <g fill="none" stroke="#fff" strokeWidth="1.400">
    <path d="M5 5v5h15V5M5 31v-5h15v5M5 13.500h15v9H5zM26.500 5v6M26.500 18v14" /><path d="M25 12.500h3v3h-3z" fill="#fff" />
  </g>
);
const ExplorerIcon = () => (
  <g><path d="M2 4h13l2 3h17v6H2z" fill="#e1a514" /><path d="M2 8h32v25H2z" fill="#fcd468" /><path d="M7 33V21h22v12h-6v-6H13v6z" fill="#3d96dc" /></g>
);
const OutlookIcon = () => (
  <g>
    <path d="M10 0h24v26H10z" fill="#1066b8" /><path d="M10 0h12v9H10z" fill="#0f5299" /><path d="M22 0h12v9H22z" fill="#28a8ea" /><path d="M22 9h12v9H22z" fill="#50d9ff" opacity=".7" />
    <path d="M8 20h24v14H12c-2 0-4-1-4-4z" fill="#1490df" /><rect x="-1" y="8" width="19" height="19" rx="2" fill="#0a64b8" />
    <ellipse cx="8.500" cy="17.500" rx="4" ry="5" fill="none" stroke="#fff" strokeWidth="2.500" />
    <path d="M17 24h22v18H17z" fill="#e8b878" /><path d="M17 24.500l11 11 11-11" fill="none" stroke="#fff" strokeWidth="2" />
  </g>
);
const ChromeIcon = () => (
  <g>
    <circle cx="18" cy="18" r="16.500" fill="#de4a3c" />
    <path d="M18 18 3.700 9.700A16.500 16.500 0 0 0 16 34.400l6-11z" fill="#1aa260" /><path d="M18 10.500h14.700A16.500 16.500 0 0 1 16.500 34.400L25 20z" fill="#fbc81e" />
    <circle cx="18" cy="18" r="8" fill="#fff" /><circle cx="18" cy="18" r="6.300" fill="#4a86ee" />
  </g>
);
const RemoteIcon = () => (
  <g>
    <circle cx="9" cy="9" r="8" fill="#d6d9dd" /><path d="M4 3l7 8" stroke="#666" strokeWidth="2" /><path d="M10 14l2 8" stroke="#999" strokeWidth="3" />
    <path d="M15 5 34 3v22l-17-3z" fill="#d8def0" /><path d="M18 8l14-2v16l-13-3z" fill="#3b9ff0" />
    <ellipse cx="26" cy="31" rx="8" ry="5" fill="#b9bde0" /><ellipse cx="17" cy="27" rx="6" ry="4" fill="#cfd2ea" />
  </g>
);
const UiText = styled.text`
  font-family: ${UI};
  font-weight: 600;
`;
const UiIcon = () => (
  <g><path d="M0 0h36v36H0z" fill="#0a73bf" /><UiText x="18" y="28.500" textAnchor="middle" fontSize="27" fill="#fff">Ui</UiText></g>
);
const UiIconLight = () => (
  <g><path d="M1 1h34v34H1z" fill="#fff" stroke="#0a73bf" strokeWidth="2" /><UiText x="18" y="28" textAnchor="middle" fontSize="26" fill="#0a73bf">Ui</UiText></g>
);
const NotepadIcon = () => (
  <g>
    <path d="M3 3h26v30H3z" fill="#f4f4f4" /><path d="M4 4h24" stroke="#555" strokeDasharray="1.500 1.500" strokeWidth="2.500" />
    <path d="M4 14h22l-2 18H4z" fill="#6fc52a" /><path d="M7 20c3-6 14-5 16 0-3 6-13 6-16 0z" fill="#a3e34d" stroke="#1f5a0c" />
    <path d="M11 20h9M15 12l2 3" stroke="#1f3a0c" strokeWidth="1.500" /><path d="M34 1 24 25l-2 3 0-4L31 0z" fill="#eeb02a" stroke="#8a5a10" />
  </g>
);
const ZoomIcon = () => (
  <g><rect x="2" y="1" width="34" height="34" rx="9" fill="#4a8cf8" /><rect x="8" y="12" width="15" height="12" rx="2.500" fill="#fff" /><path d="M24 16.500l6-4v11l-6-4z" fill="#fff" /></g>
);
const SlackIcon = () => (
  <g>
    <circle cx="17.500" cy="18" r="17" fill="#fff" />
    <g strokeWidth="5" strokeLinecap="round">
      <path d="M8 15h7M14.500 8v.1" stroke="#36c5f0" /><path d="M20.500 8v6M26.500 14.500h.1" stroke="#2eb67d" />
      <path d="M9 21h.1M14.500 22v6" stroke="#e01e5a" /><path d="M20 21h7" stroke="#ecb22e" />
    </g>
    <circle cx="27" cy="27" r="10.500" fill="#cf1547" stroke="#5e1025" />
    <UiText x="27" y="32.500" textAnchor="middle" fontSize="15" fill="#fff">3</UiText>
  </g>
);
const PptIcon = () => (
  <g>
    <circle cx="20" cy="18" r="16" fill="#ed6c47" /><path d="M20 2a16 16 0 0 1 16 16H20z" fill="#ff8f6b" /><path d="M4 18a16 16 0 0 0 32 0z" fill="#d35230" />
    <rect x="0" y="9" width="18" height="18" rx="2" fill="#c43e1c" />
    <UiText x="9" y="23.500" textAnchor="middle" fontSize="14.500" fill="#fff">P</UiText>
  </g>
);
const IeShape = () => (
  <g>
    <path d="M10 19.500H32C32 12 27 7.500 20.500 7.500S8.500 12.500 8.500 20s5 12 12 12c5 0 9-2.500 10.500-6.500" fill="none" stroke="#4cc3f2" strokeWidth="6" />
    <path d="M3 33C-3 28 14 5 30 2.500c6-1 6 4 3.500 8" fill="none" stroke="#f7c915" strokeWidth="3" />
    <path d="M3 33c2 1.500 6 0 9-2" fill="none" stroke="#f7c915" strokeWidth="2.500" />
  </g>
);
const Icon36 = ({ s, children }: { s: number; children: React.ReactNode }) => (
  <svg width={s} height={s} viewBox="0 0 36 36">{children}</svg>
);

const TASKS: [React.FC, string?][] = [
  [ExplorerIcon, "alert"], [OutlookIcon, "alert"], [ChromeIcon], [RemoteIcon], [UiIcon, "multi"], [NotepadIcon],
  [ZoomIcon, "multi"], [SlackIcon], [PptIcon], [UiIconLight], [IeShape, "active"],
];

const TaskButtons = ({ k }: { k: number }) => (
  <>
    <BarSlot $w={73 * k}><Icon36 s={36 * k}><WinLogo /></Icon36></BarSlot>
    <BarSlot $w={71 * k}><Icon36 s={36 * k}><TaskGlass /></Icon36></BarSlot>
    <BarSlot $w={77 * k}><Icon36 s={36 * k}><TaskView /></Icon36></BarSlot>
    {TASKS.map(([I, kind], i) => (
      <Tile key={i} $k={k} $kind={kind}>
        <TileIcon><Icon36 s={36 * k}><I /></Icon36></TileIcon>
        <Underline $k={k} $kind={kind} />
      </Tile>
    ))}
  </>
);

const TREE: { t: string; root?: boolean; icon?: React.ReactNode; active?: boolean; pin?: boolean }[] = [
  { t: "Work", pin: true }, { t: "Temp" }, { t: "Temp-Reports" }, { t: "WI4-Dispatcher-Canberra-Deloitte" }, { t: "WI4-Performer-Demo-Can" },
  { t: "OneDrive - UiPath", root: true, icon: <OneDrive /> },
  { t: "Advanced Developer Training" }, { t: "Business Analyst Training" }, { t: "CustomerEvent" },
  { t: "DataExtraction - ML Extractor - Demo -" }, { t: "Demo Videos" }, { t: "EYShare" }, { t: "Home Loan Docs" },
  { t: "Mainframe Material" }, { t: "MichaelCooray" }, { t: "Pal9000" }, { t: "Sherpa Consulting" },
  { t: "UC-7 & UC-8 Receipting PDF & Housing" }, { t: "UiPath Logos" }, { t: "Willoughby council" }, { t: "WorkingDeoms" },
  { t: "Academy Live.zip", icon: <WinRar /> },
  { t: "UiPath", root: true, icon: <Building /> },
  { t: "APAC Partner PreSales - 2019 Q2 Team" }, { t: "Michael Cooray - AdvancedDeveloperTr" },
  { t: "This PC", root: true, icon: <PcIcon /> },
  { t: "3D Objects", icon: <Cube /> }, { t: "Desktop", icon: <DesktopIcon /> }, { t: "Documents", icon: <DocIcon />, active: true },
];
const CRUMBS = ["This PC", "Documents", "UiPath", "WI4-Performer-Canberra-Deloitte", "Data", "Temp"];

const RibbonView = () => (
  <Ribbon>
    <Group $w={364}>
      <GroupBody $pl={9}>
        <BigButton $w={91} $bg><BigIcon><Pin s={31} /></BigIcon>Pin to Quick<br />access</BigButton>
        <BigButton $w={62} $bg $dim><BigIcon><CopyIcon /></BigIcon>Copy</BigButton>
        <BigButton $w={62} $bg $dim><BigIcon><PasteIcon /></BigIcon>Paste</BigButton>
        <SmallList>
          <SmallButton $w={61} $bg $dim><SmallIcon $w={32}><Scissors /></SmallIcon>Cut</SmallButton>
          <SmallButton $w={108} $bg $dim><SmallIcon $w={32}><PathIcon /></SmallIcon>Copy path</SmallButton>
          <SmallButton $w={134} $bg $dim><SmallIcon $w={32}><ShortcutIcon /></SmallIcon>Paste shortcut</SmallButton>
        </SmallList>
      </GroupBody>
      <GroupLabel $c={183}>Clipboard</GroupLabel>
    </Group>
    <Group $w={280} $line>
      <GroupBody $pl={9}>
        <BigButton $w={62} $bg $dim><BigIcon><MoveToIcon /></BigIcon>Move<br /><span>to <DownTri $dim /></span></BigButton>
        <BigButton $w={62} $bg $dim><BigIcon><CopyToIcon /></BigIcon>Copy<br /><span>to <DownTri $dim /></span></BigButton>
        <OrganizeLine />
        <BigButton $w={62} $iconBg><BigIcon><DeleteIcon /></BigIcon>Delete<br /><span><DownTri /></span></BigButton>
        <BigButton $w={64} $bg $dim><BigIcon><RenameIcon /></BigIcon>Rename</BigButton>
      </GroupBody>
      <GroupLabel $c={139}>Organize</GroupLabel>
    </Group>
    <Group $w={205} $line>
      <GroupBody $pl={4}>
        <BigButton $w={62}><BigIcon><NewFolderIcon /></BigIcon>New<br />folder</BigButton>
        <SmallList $ml={2}>
          <SmallButton />
          <SmallButton><SmallIcon $w={31}><EasyAccessIcon /></SmallIcon><span>Easy access <DownTri /></span></SmallButton>
        </SmallList>
      </GroupBody>
      <GroupLabel $c={100}>New</GroupLabel>
    </Group>
    <Group $w={182} $line>
      <GroupBody $pl={4}>
        <BigButton $w={79}><BigIcon><PropertiesIcon /></BigIcon>Properties<br /><span><DownTri /></span></BigButton>
        <SmallList>
          <SmallButton $w={89} $bg $dim $h={33}><SmallIcon $w={32} /><span>Open&nbsp; <DownTri $dim /></span></SmallButton>
          <SmallButton $w={63} $bg $dim $h={33}><SmallIcon $w={32}><EditIcon /></SmallIcon>Edit</SmallButton>
          <SmallButton $w={87} $bg $h={33}><SmallIcon $w={32}><HistoryIcon /></SmallIcon>History</SmallButton>
        </SmallList>
      </GroupBody>
      <GroupLabel $c={88}>Open</GroupLabel>
    </Group>
    <Group $w={157} $line>
      <GroupBody $pl={5}>
        <SmallList>
          <SmallButton><SmallIcon $w={32}><SelectIcon on={[true, true, true, true]} /></SmallIcon>Select all</SmallButton>
          <SmallButton><SmallIcon $w={32}><SelectIcon on={[false, false, false, false]} /></SmallIcon>Select none</SmallButton>
          <SmallButton><SmallIcon $w={32}><SelectIcon on={[false, true, true, false]} /></SmallIcon>Invert selection</SmallButton>
        </SmallList>
      </GroupBody>
      <GroupLabel $c={76}>Select</GroupLabel>
    </Group>
  </Ribbon>
);

const Explorer = () => (
  <>
    <TitleRow>
      <QuickAccess>
        <svg width="19" height="25" viewBox="0 0 19 25"><path d="M.5.500h17v19l1 1v4H.5z" fill="#fddf85" stroke="#edc45c" /><path d="M17 17v7" stroke="#dba83a" /></svg>
        <QuickDivider />
        <CheckDoc />
        <NavSlot $w={16} />
        <Folder w={14} h={19} />
      </QuickAccess>
      <Spacer />
      <WindowButtons $gap={54} $top={4}><Minimize c="#999" /><Restore c="#999" /><Close c="#999" /></WindowButtons>
    </TitleRow>
    <TabRow>
      <RibbonTab />
      <Spacer />
      <TabTools>
        <Chevron w={16} h={9} dir="u" c="#aaa" />
        <HelpBadge>?</HelpBadge>
      </TabTools>
    </TabRow>
    <RibbonView />
    <AddressRow>
      <NavArrows>
        <NavSlot $w={46}><Arrow dir="l" c="#777" /></NavSlot>
        <NavSlot $w={39}><Arrow dir="r" c="#dadada" /></NavSlot>
        <NavSlot $w={27}><Chevron w={8} h={4} dir="d" c="#777" /></NavSlot>
        <Arrow dir="u" c="#777" />
      </NavArrows>
      <AddressBox>
        <Folder w={15} h={20} />
        <CrumbSep $w={36}><Chevron w={5} h={9} dir="r" c="#777" sw={2.5} /></CrumbSep>
        {CRUMBS.map((c, i) => (
          <React.Fragment key={c}>
            {i > 0 && <CrumbSep><Chevron w={5} h={9} dir="r" c="#777" sw={2.5} /></CrumbSep>}
            <span>{c}</span>
          </React.Fragment>
        ))}
        <Spacer />
        <Chevron w={11} h={7} dir="d" c="#777" sw={2.5} />
        <RefreshCell><Refresh s={17} c="#777" /></RefreshCell>
      </AddressBox>
      <SearchBox><Glass s={19} c="#777" />Search Temp</SearchBox>
    </AddressRow>
    <Main>
      <Tree>
        {TREE.map(r => (
          <TreeRow key={r.t} $root={r.root} $active={r.active}>
            <TreeIcon $shift={r.icon ? 2 : 5}>{r.icon || <Folder />}</TreeIcon>
            <TreeText>{r.t}</TreeText>
            {r.pin && <PinSlot><Pin s={15} /></PinSlot>}
          </TreeRow>
        ))}
      </Tree>
      <ScrollBar>
        <ScrollArrow $h={157} $pt={12}><Chevron w={11} h={7} dir="u" c="#505050" sw={3} /></ScrollArrow>
        <ScrollThumb />
        <Spacer />
        <ScrollArrow $h={18} $pt={1}><Chevron w={11} h={7} dir="d" c="#505050" sw={3} /></ScrollArrow>
      </ScrollBar>
      <FileList>
        <HeaderRow>
          <HeaderCell $w={460} $pl={28}>Name<SortMark><Chevron w={11} h={6} dir="u" c="#666" sw={1.2} /></SortMark></HeaderCell>
          <HeaderCell $w={243} $pl={10}>Date modified</HeaderCell>
          <HeaderCell $w={203} $pl={9}>Type</HeaderCell>
          <HeaderCell $w={135} $pl={9}>Size</HeaderCell>
        </HeaderRow>
        <FileRow>
          <FileCell $w={460} $pl={31} $dark><TextFile />placeholder.txt</FileCell>
          <FileCell $w={243} $pl={10} $ls={0.4}>6/02/2020 1:00 PM</FileCell>
          <FileCell $w={203} $pl={9}>Text Document</FileCell>
          <FileCell $w={134} $right>1 KB</FileCell>
        </FileRow>
      </FileList>
    </Main>
    <StatusBar>
      1 item<StatusLine /><Spacer />
      <ViewButton $on><Details /></ViewButton>
      <ViewButton><Thumbs /></ViewButton>
    </StatusBar>
  </>
);

const Meeting = () => (
  <MeetingOverlay>
    <MeetingBar>
      <MeetingItem $w={120}><MeetingIcon><Mic /></MeetingIcon>Mute</MeetingItem>
      <ChevronSlot><Chevron w={17} h={9} dir="d" c="#fff" sw={2.2} /></ChevronSlot>
      <MeetingItem $w={132}><MeetingIcon><Camera /></MeetingIcon>Start Video</MeetingItem>
      <ChevronSlot><Chevron w={17} h={9} dir="d" c="#fff" sw={2.2} /></ChevronSlot>
      <MeetingItem $w={190}><MeetingIcon><People /></MeetingIcon>Manage Participants<Count>7</Count></MeetingItem>
      <MeetingItem $w={112}><MeetingIcon><PollsIcon /></MeetingIcon>Polls</MeetingItem>
      <MeetingItem $w={122}><MeetingIcon><NewShareIcon /></MeetingIcon>New Share</MeetingItem>
      <MeetingItem $w={142}><MeetingIcon><Pause /></MeetingIcon>Pause Share</MeetingItem>
      <MeetingItem $w={105}><MeetingIcon><Pencil /></MeetingIcon>Annotate</MeetingItem>
      <MeetingItem $w={180}><MeetingIcon><Mouse /></MeetingIcon>Remote Control</MeetingItem>
      <MeetingItem $w={97} $dim><MeetingIcon><Dots /></MeetingIcon>More</MeetingItem>
    </MeetingBar>
    <ShareStrip>
      <MeetingId>
        <CurvedArrow />
        <IdText>ID: 322-328-409</IdText>
        <IdIcons><RecCloud /><SecureLock /></IdIcons>
      </MeetingId>
      <StopShare><StopSquare />Stop Share</StopShare>
    </ShareStrip>
  </MeetingOverlay>
);

const Browser = () => (
  <>
    <BrowserTop>
      <WindowButtons $gap={35} $top={0}><Minimize c="#000" s={10} /><Restore c="#000" s={10} /><Close c="#000" s={10} /></WindowButtons>
    </BrowserTop>
    <BrowserRow>
      <BackButton>
        <svg width="22" height="20" viewBox="0 0 22 20" fill="none" stroke="#fff" strokeWidth="4"><path d="M22 10H4M11 2 3 10l8 8" /></svg>
      </BackButton>
      <ForwardButton>
        <svg width="15" height="13" viewBox="0 0 15 13" fill="#fff" stroke="#b5b5b5"><path d="M.5 5h7L5 1h3.500l6 5.500-6 5.500H5l2.500-4h-7z" /></svg>
      </ForwardButton>
      <UrlBox $w={1255}>
        <Icon36 s={16}><IeShape /></Icon36>
        <UrlText><b>https</b>://acme-test.<b>uipath.com</b>/reports/download</UrlText>
        <Spacer />
        <DownTri $c="#777" $s={3.5} />
        <svg width="10" height="12" viewBox="0 0 10 12"><path d="M0 5h10v7H0z" fill="#777" /><path d="M2.500 5V3.500c0-3 5-3 5 0V5" fill="none" stroke="#777" strokeWidth="1.500" /></svg>
        <svg width="11" height="12" viewBox="0 0 11 12" fill="none" stroke="#777" strokeWidth="2"><path d="M9 3.500a4.300 4.300 0 1 0 .8 3.500" /><path d="M10 0v4.500H5.500z" fill="#777" stroke="none" /></svg>
      </UrlBox>
      <UrlBox $w={478} $ml={6} $pl={7}>
        Search...
        <Spacer />
        <Glass s={13} c="#777" sw={2.8} />
        <DownTri $c="#777" $s={3.5} />
      </UrlBox>
      <BrowserTools>
        <svg width="16" height="16" viewBox="0 0 16 16" fill="none" stroke="#a5a5a5"><path d="M.5 8 8 .700l3 2.800V2h2v3.500L15.500 8l-1 1H13v6.500h-3v-5H6v5H3V9H1.500z" /></svg>
        <svg width="16" height="16" viewBox="0 0 16 16" fill="none" stroke="#a5a5a5"><path d="M8 .7l2 5.300h5.500L11 9.300l1.800 6L8 11.800l-4.800 3.500 1.800-6L.5 6H6z" /></svg>
        <svg width="16" height="16" viewBox="0 0 16 16" fill="none" stroke="#a5a5a5"><circle cx="8" cy="8" r="6" strokeDasharray="2.700 2" strokeWidth="3" /><circle cx="8" cy="8" r="5.500" fill="#fff" /><circle cx="8" cy="8" r="2.300" /></svg>
        <svg width="16" height="16" viewBox="0 0 16 16"><circle cx="8" cy="8" r="7.500" fill="#fcd93c" stroke="#b5a678" /><path d="M6 4.500v3M10 4.500v3M4 9.500c2 4 6 4 8 0" fill="none" stroke="#8a6c1c" strokeWidth="1.300" /></svg>
      </BrowserTools>
    </BrowserRow>
    <TabStrip>
      <BrowserTab>
        <Icon36 s={16}><IeShape /></Icon36>
        <TabTitle>ACME System 1 - Reports - ...</TabTitle>
        <svg width="7" height="7" stroke="#999" strokeWidth="2"><path d="M0 0l7 7M7 0L0 7" /></svg>
      </BrowserTab>
      <NewTab>
        <svg width="13" height="15" viewBox="0 0 13 15"><path d="M.5 2.500h10v12H.5z" fill="#fff" stroke="#8a8a8a" /><path d="M10.500 0v7M7 3.500h7M8 1l5 5M13 1 8 6" stroke="#f2a42a" /></svg>
      </NewTab>
    </TabStrip>
    <SiteNav><Brand>ACME System 1</Brand><NavLink>Home</NavLink><NavLink>Log Out</NavLink></SiteNav>
    <Page>
      <PageTitle>Reports - Download Monthly Report</PageTitle>
      <Breadcrumb><a>Home</a><i>/</i><span>Reports - Download Monthly Report</span></Breadcrumb>
      <Form>
        <div>Please fill in the following form to be able to download a specific Vendor<br />Monthly Report.</div>
        <FieldLabel $mt={9}>Vendor TaxID:</FieldLabel>
        <TextField>RO094782</TextField>
        <FieldLabel $mt={14}>Month:</FieldLabel>
        <Select>December<DownTri $c="#333" $s={3.5} /></Select>
        <FieldLabel $mt={9}>Year:</FieldLabel>
        <Select $active>2019<DownTri $c="#333" $s={3.5} /></Select>
        <SubmitButton>Download Report</SubmitButton>
      </Form>
      <Copyright>Copyright © 2020 ACME Systems</Copyright>
    </Page>
  </>
);

const RightTray = () => (
  <Tray>
    <BatteryMeter>100%</BatteryMeter><BatteryNub />
    <TraySlot $ml={6}><svg width="9" height="16" viewBox="0 0 9 16" fill="#fff"><path d="M1 0h2v4h3V0h2v4h1v5L6 12v4H3v-4L0 9V4h1z" /></svg></TraySlot>
    <TraySlot $ml={11}><Chevron w={12} h={6} dir="u" c="#fff" sw={1.3} /></TraySlot>
    <TraySlot $ml={10}><OneDrive w={16} /></TraySlot>
    <TraySlot $ml={8}><svg width="16" height="12" viewBox="0 0 16 12"><path d="M5 3.500h9.500v7H5" fill="none" stroke="#fff" /><path d="M6.500 5H13v4H6.500z" fill="#fff" /><path d="M15 5h1v4h-1zM0 2h5v3L3 7v4H2V7L0 5zM.7 0h1v2h-1zM3.300 0h1v2h-1z" fill="#fff" /></svg></TraySlot>
    <TraySlot $ml={8}><svg width="16" height="14" viewBox="0 0 16 14" fill="none" stroke="#fff"><path d="M.5 5H3l3.500-4v12L3 9H.5zM9 5c1 1 1 3 0 4M11 3c2.500 2 2.500 6 0 8M13 1c4 3.500 4 8.500 0 12" /></svg></TraySlot>
    <TraySlot $ml={11}><svg width="13" height="13" viewBox="0 0 13 13" fill="none" stroke="#ddd"><path d="M.5 11C.5 5 5 .500 12 .500M3.500 11.500c0-4.500 3-8 9-8M6.500 12c0-3 2-5.500 6-5.500" /><circle cx="11" cy="11" r="1.500" fill="#fff" /></svg></TraySlot>
    <TraySlot $ml={9}><TrayText>ENG</TrayText></TraySlot>
    <TraySlot $ml={11}><Clock $fs={11.3} $lh={18.5} $w={62}>11:26 AM<br />26/03/2020</Clock></TraySlot>
    <TraySlot $ml={17}>
      <svg width="26" height="26" viewBox="0 0 26 26">
        <path d="M0 1h16v11H5l-3 3v-3H0z" fill="#fff" /><path d="M3 4.500h10M3 7h10M3 9.500h7" stroke="#2b2021" />
        <circle cx="16" cy="16" r="10" fill="#3a3535" stroke="#aaa" />
        <UiText x="16" y="20" textAnchor="middle" fontSize="11" fill="#fff">39</UiText>
      </svg>
    </TraySlot>
    <ShowDesktop />
  </Tray>
);

export default function App() {
  return (
    <>
      <Global />
      <Desktop>
        <LeftMonitor>
          <Explorer />
          <Bar $k={1}>
            <TaskButtons k={1} />
            <Spacer />
            <Clock $fs={17.3} $lh={28} $w={115}>11:26 AM<br />26/03/2020</Clock>
          </Bar>
          <Meeting />
        </LeftMonitor>
        <RightMonitor>
          <Browser />
          <Bar $k={2 / 3} $right>
            <TaskButtons k={2 / 3} />
            <Spacer />
            <RightTray />
          </Bar>
        </RightMonitor>
      </Desktop>
    </>
  );
}
